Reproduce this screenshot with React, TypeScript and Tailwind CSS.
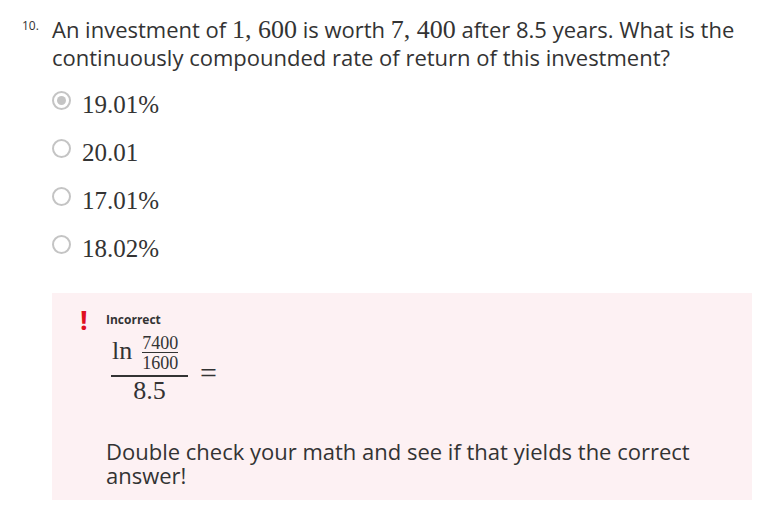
import React from "react";

const serif = "font-['Liberation_Serif',serif]";
const sans = "font-['Open_Sans',sans-serif]";

const options = [
  { label: "19.01%", selected: true },
  { label: "20.01", selected: false },
  { label: "17.01%", selected: false },
  { label: "18.02%", selected: false },
];

function Radio({ selected }: { selected: boolean }) {
  return (
    <span className="w-[19px] h-[19px] mb-[8px] rounded-full border-2 border-[#c4c4c4] bg-white flex items-center justify-center shrink-0">
      {selected && <span className="w-[9px] h-[9px] rounded-full bg-[#c4c4c4]" />}
    </span>
  );
}

// ln(7400/1600) / 8.5 =
function Formula() {
  return (
    <div className={`flex items-start text-[#333] ${serif}`}>
      <div className="flex flex-col w-[77px]">
        <div className="h-[39px] flex items-start pl-[1px]">
          <span className="text-[26px] leading-[26px] mt-[2px]">ln</span>
          <div className="flex flex-col items-center ml-[10px] text-[18px] leading-[15px]">
            <span>7400</span>
            <span className="w-full border-t border-[#333] mt-[1px]" />
            <span className="mt-[3px]">1600</span>
          </div>
        </div>
        <div className="w-full h-[2px] bg-[#333]" />
        <span className="text-[26px] leading-[26px] mt-[1px] text-center">8.5</span>
      </div>
      <span className="text-[30px] leading-[30px] ml-[12px] mt-[22px]">=</span>
    </div>
  );
}

export default function App() {
  return (
    <div className={`w-[770px] h-[516px] bg-white text-[#333] ${sans}`}>
      {/* Question */}
      <div className="flex pl-[22px] pt-[15px]">
        <span className="w-[30px] text-[12px] leading-[20px] pt-[1px] shrink-0">10.</span>
        <p className="text-[22px] leading-[28px] w-[710px]">
          An investment of <span className={`${serif} text-[26px] leading-none`}>1, 600</span> is worth{" "}
          <span className={`${serif} text-[26px] leading-none`}>7, 400</span> after 8.5 years. What is the
          continuously compounded rate of return of this investment?
        </p>
      </div>

      {/* Options */}
      <div className="flex flex-col pl-[52px] pt-[9px]">
        {options.map((o) => (
          <div key={o.label} className="h-[48px] flex items-center gap-[11px]">
            <Radio selected={o.selected} />
            <span className={`${serif} text-[25px] leading-none`}>{o.label}</span>
          </div>
        ))}
      </div>

      {/* Feedback */}
      <div className="ml-[52px] mt-[21px] w-[700px] h-[207px] bg-[#fdf1f3] flex pl-[28px] pt-[13px]">
        <span className="w-[26px] text-[#e0101f] font-bold text-[27px] leading-[27px]">!</span>
        <div className="flex flex-col">
          <span className="text-[12px] font-bold leading-[20px] mt-[4px]">Incorrect</span>
          <div className="ml-[5px] mt-[6px]">
            <Formula />
          </div>
          <p className="text-[22px] leading-[24px] mt-[35px] w-[620px]">
            Double check your math and see if that yields the correct answer!
          </p>
        </div>
      </div>
    </div>
  );
}
